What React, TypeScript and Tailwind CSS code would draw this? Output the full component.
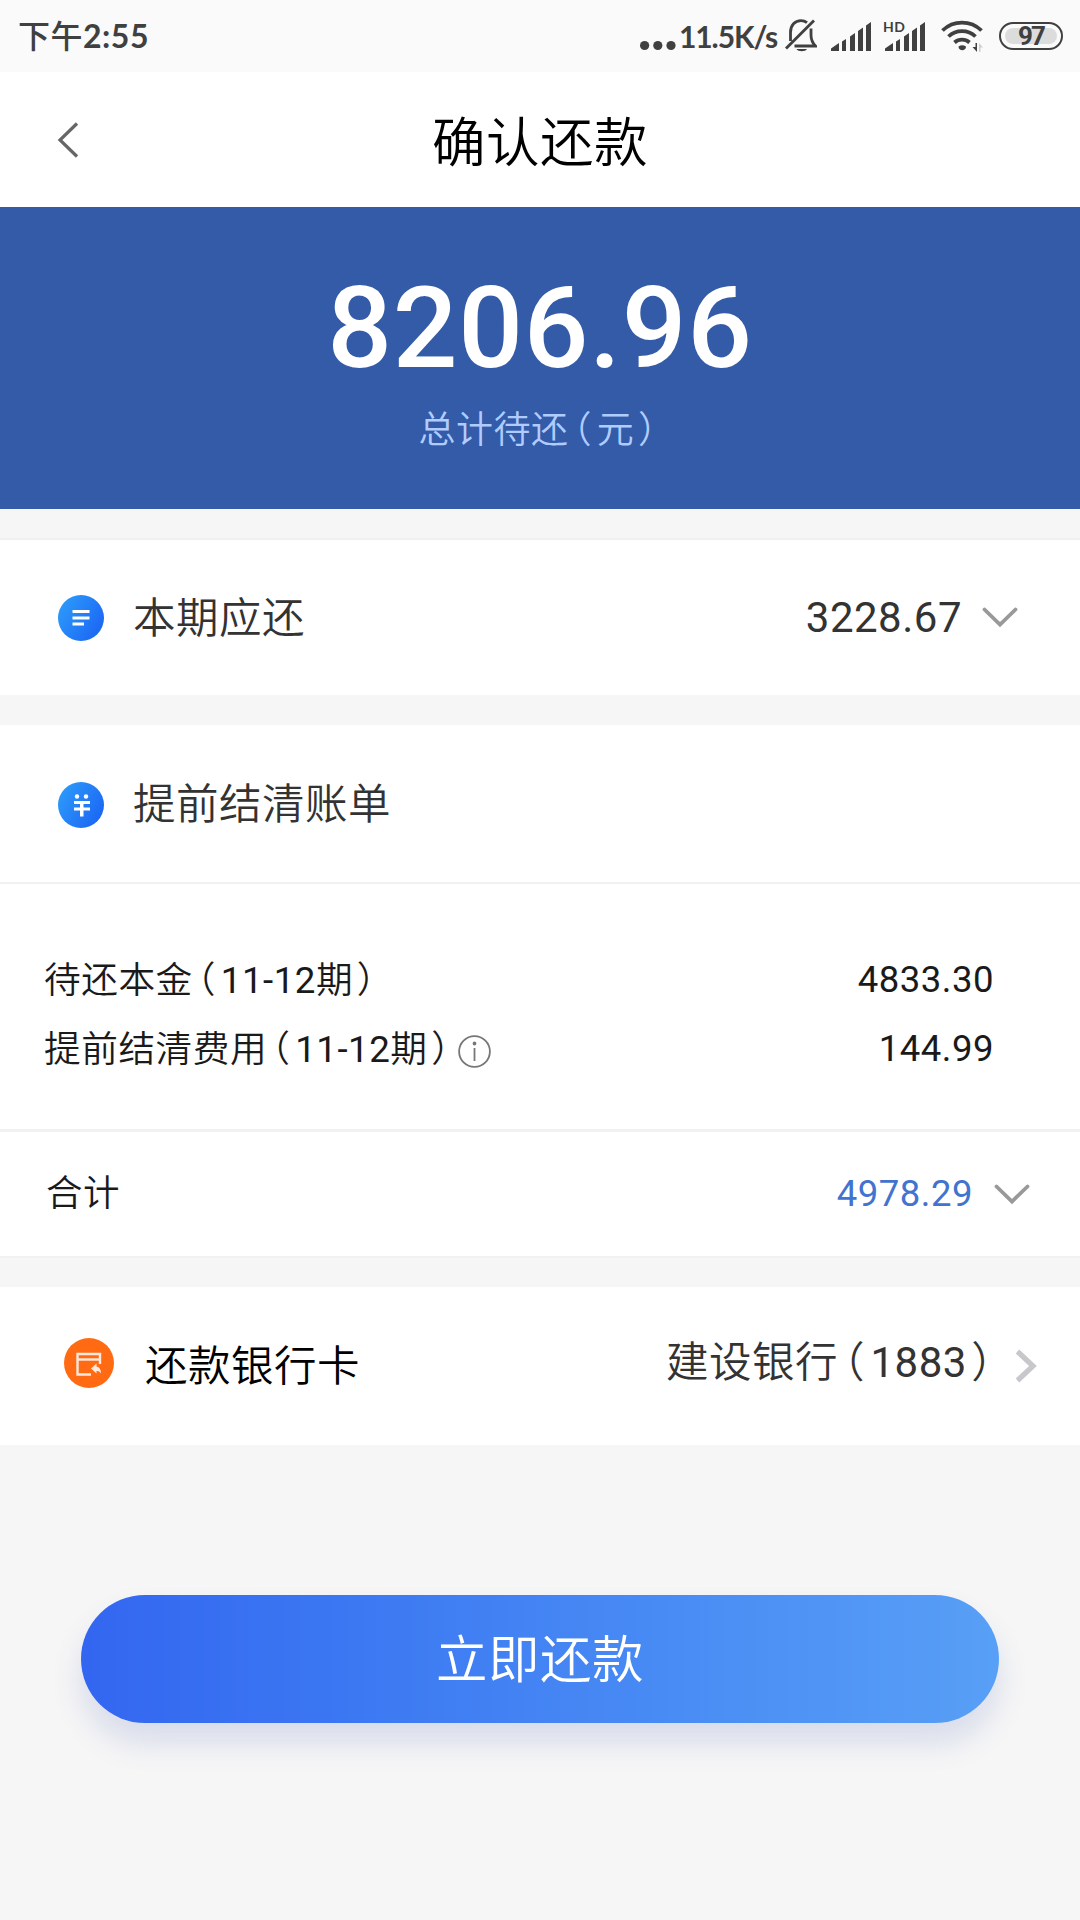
import React from 'react';

const font = "font-[Roboto,'Noto_Sans_CJK_SC',sans-serif]";
const statusFont = "font-[Lato,'Noto_Sans_CJK_SC',sans-serif]";

const details = [
  { label: '待还本金', period: '11-12', amount: '4833.30', info: false },
  { label: '提前结清费用', period: '11-12', amount: '144.99', info: true },
];

// Chinese parentheses set on half-width cells
function Paren({ children }: { children: React.ReactNode }) {
  return (
    <>
      <span className="ml-[0.12em] mr-[0.13em] [font-feature-settings:'halt']">（</span>
      {children}
      <span className="ml-[0.1em] mr-[0.12em] [font-feature-settings:'halt']">）</span>
    </>
  );
}

function SignalBars() {
  return (
    <svg width="40" height="29" viewBox="0 0 40 29" fill="#404040">
      <path d="M0 29v-2.5L8 21v8z" />
      <path d="M11 29V19.5l4-2.5v12z" />
      <path d="M19 29V14.5l5-3.5v18z" />
      <path d="M27 29V9l5-3.5V29z" />
      <path d="M35 29V3.5L40 0v29z" />
    </svg>
  );
}

function StatusBar() {
  return (
    <div className={`flex h-[72px] items-center justify-between bg-[#fafafa] pl-[18px] pr-[17px] text-[#404040] ${statusFont}`}>
      <div className="text-[32px] font-bold leading-none"><span className="font-medium">下午</span>2:55</div>
      <div className="flex items-center">
        <svg width="36" height="30" viewBox="0 0 36 30" fill="#404040">
          <circle cx="4.6" cy="24.5" r="4.6" />
          <circle cx="17.8" cy="24.5" r="4.6" />
          <circle cx="31" cy="24.5" r="4.6" />
        </svg>
        <span className="ml-[3px] w-[106px] text-[30px] font-bold leading-none tracking-[-1.1px]">11.5K/s</span>
        <svg width="32" height="34" viewBox="0 0 32 34" fill="none" stroke="#404040" strokeWidth="2.8">
          <path d="M5.5 22V13.5C5.5 6 10 1.7 16 1.7c2.5 0 4.5.8 6 2" />
          <path d="M26 9.5V16c0 5 2 8.5 4.5 11H9.5" />
          <path d="M29 1.5L1 29.5" />
          <path d="M11.5 30h10.5c-1.5 3-9 3-10.5 0z" fill="#404040" stroke="none" />
        </svg>
        <div className="ml-[14px]"><SignalBars /></div>
        <div className="relative ml-[14px]">
          <SignalBars />
          <span className="absolute -left-[2px] -top-[2px] text-[14px] font-bold leading-none">HD</span>
        </div>
        <svg className="ml-[16px]" width="43" height="34" viewBox="0 0 43 34" fill="none" stroke="#404040" strokeWidth="3.8">
          <path d="M1.5 11.5a28 28 0 0 1 39 0" />
          <path d="M7.5 17.5a19.5 19.5 0 0 1 27 0" />
          <path d="M13.5 23.5a11.5 11.5 0 0 1 15 0" />
          <path d="M17.5 27.5q3.5-2.5 7.5 0c0 5-7.5 5-7.5 0z" fill="#404040" stroke="none" />
          <path d="M36 24v9l-4.5-5h3V24z" fill="#404040" stroke="none" />
          <path d="M38 33v-9l4 4.5h-2.5V33z" fill="#cfcfcf" stroke="none" />
        </svg>
        <div className="ml-[15px] flex h-[28px] w-[64px] rounded-full border-[2.5px] border-[#404040] p-[4px]">
          <div className="flex flex-1 items-center justify-center rounded-full bg-[#dcdcdc] font-[Roboto] text-[26px] font-bold leading-none tracking-[-2px]">97</div>
        </div>
      </div>
    </div>
  );
}

function ChevronDown({ className }: { className?: string }) {
  return (
    <svg className={className} width="36" height="21" viewBox="0 0 36 21" fill="none" stroke="#999" strokeWidth="3.8" strokeLinecap="round">
      <path d="M2.5 2.5L18 17.5L33.5 2.5" />
    </svg>
  );
}

function BlueBadge({ id, children }: { id: string; children: React.ReactNode }) {
  return (
    <svg width="46" height="46" viewBox="0 0 46 46">
      <defs>
        <linearGradient id={id} x1="0" y1="0.2" x2="1" y2="0.8">
          <stop offset="0" stopColor="#2d9bfb" />
          <stop offset="1" stopColor="#1b64f3" />
        </linearGradient>
      </defs>
      <circle cx="23" cy="23" r="23" fill={`url(#${id})`} />
      {children}
    </svg>
  );
}

export default function App() {
  return (
    <div className={`flex h-[1920px] w-[1080px] flex-col overflow-hidden whitespace-nowrap bg-[#f6f6f6] tracking-[0.5px] ${font}`}>
      <StatusBar />

      <header className="grid h-[135px] grid-cols-[120px_1fr_120px] items-center bg-white">
        <svg className="ml-[57px]" width="22" height="36" viewBox="0 0 22 36" fill="none" stroke="#666" strokeWidth="3.2">
          <path d="M20 1.5L3 18L20 34.5" />
        </svg>
        <h1 className="pt-[9px] text-center text-[53.5px] font-[350] leading-none text-black">确认还款</h1>
      </header>

      <section className="flex h-[302px] flex-col items-center bg-[#335ba8] pt-[64px]">
        <div className="text-[114px] font-medium leading-none tracking-[0.7px] text-white">8206.96</div>
        <div className="mt-[27px] text-[37px] font-[350] leading-none text-[#b0ccff]">总计待还<Paren>元</Paren></div>
      </section>

      {/* Current bill */}
      <section className="mt-[29px] flex h-[157px] items-center border-t-2 border-[#f0f0f0] bg-white pl-[58px] pr-[62px] text-[42px] text-[#333]">
        <BlueBadge id="bill">
          <path d="M14.5 16.5h17M14.5 23h17M14.5 29h11.5" stroke="#fff" strokeWidth="2.8" />
        </BlueBadge>
        <span className="ml-[29px] pt-[2px] text-[42.5px] font-[350]">本期应还</span>
        <span className="ml-auto">3228.67</span>
        <ChevronDown className="ml-[20px]" />
      </section>

      {/* Early settlement */}
      <section className="mt-[30px] bg-white text-[36.5px] text-[#1a1a1a]">
        <div className="flex h-[159px] items-center border-b-2 border-[#f1f1f1] pl-[58px] pt-[2px] text-[42.5px] text-[#333]">
          <BlueBadge id="settle">
            <g fill="#fff">
              <circle cx="19" cy="14.5" r="2.2" />
              <circle cx="28" cy="14.5" r="2.2" />
              <path d="M16 19h16v3H16zM16 25.5h16v3H16zM22 19h3.5v15.5H22z" />
            </g>
          </BlueBadge>
          <span className="ml-[29px] font-[350]">提前结清账单</span>
        </div>
        <div className="h-[248px] border-b-[3px] border-[#f1f1f1] pl-[44px] pr-[86px] pt-[62px]">
          {details.map((d) => (
            <div key={d.label} className="flex h-[69px] items-center">
              <span className="text-[36.7px] font-[350]">{d.label}<Paren><span className="font-normal">{d.period}</span>期</Paren></span>
              {d.info && (
                <svg className="ml-[4px] mt-[4px]" width="33" height="33" viewBox="0 0 33 33" fill="none" stroke="#777" strokeWidth="1.8">
                  <circle cx="16.5" cy="16.5" r="15.4" />
                  <path d="M16.5 13v13" />
                  <circle cx="16.5" cy="8.5" r="1" fill="#777" />
                </svg>
              )}
              <span className="ml-auto">{d.amount}</span>
            </div>
          ))}
        </div>
        <div className="flex h-[126px] items-center border-b-2 border-[#f1f1f1] pl-[46px] pr-[50px]">
          <span className="font-[350]">合计</span>
          <span className="ml-auto text-[#4273cf]">4978.29</span>
          <ChevronDown className="ml-[21px]" />
        </div>
      </section>

      {/* Bank card */}
      <section className="mt-[29px] flex h-[158px] items-center bg-white pl-[64px] pr-[43px] text-[42.5px]">
        <svg className="mb-[6px]" width="50" height="50" viewBox="0 0 50 50">
          <circle cx="25" cy="25" r="25" fill="#ff6a13" />
          <g fill="none" stroke="#ffe9dc" strokeWidth="2.4">
            <path d="M36 26V16H13.5v20.5H27" />
            <path d="M13.5 21.5H36" />
          </g>
          <path d="M27 30.500l5.500-5v3c3 .5 4.500 3 4.500 7-1.500-2-2.500-2.500-4.500-2.500v2.500z" fill="#ffe9dc" />
        </svg>
        <span className="ml-[31px] pt-[1px] font-[350] text-black">还款银行卡</span>
        <span className="mb-[7px] ml-auto font-[350] text-[#333]">建设银行<Paren><span className="text-[42px] font-normal">1883</span></Paren></span>
        <svg className="ml-[17px]" width="22" height="34" viewBox="0 0 22 34" fill="none" stroke="#c7c7cc" strokeWidth="5.2">
          <path d="M2.5 2.5L18 17L2.5 31.5" />
        </svg>
      </section>

      <button className="mx-[81px] mt-[150px] flex h-[128px] items-center justify-center rounded-full bg-linear-to-r from-[#3366f0] to-[#589ff6] pt-[3px] text-[51.5px] font-[350] text-white shadow-[0_20px_30px_rgba(60,90,180,0.16)]">
        立即还款
      </button>
    </div>
  );
}
